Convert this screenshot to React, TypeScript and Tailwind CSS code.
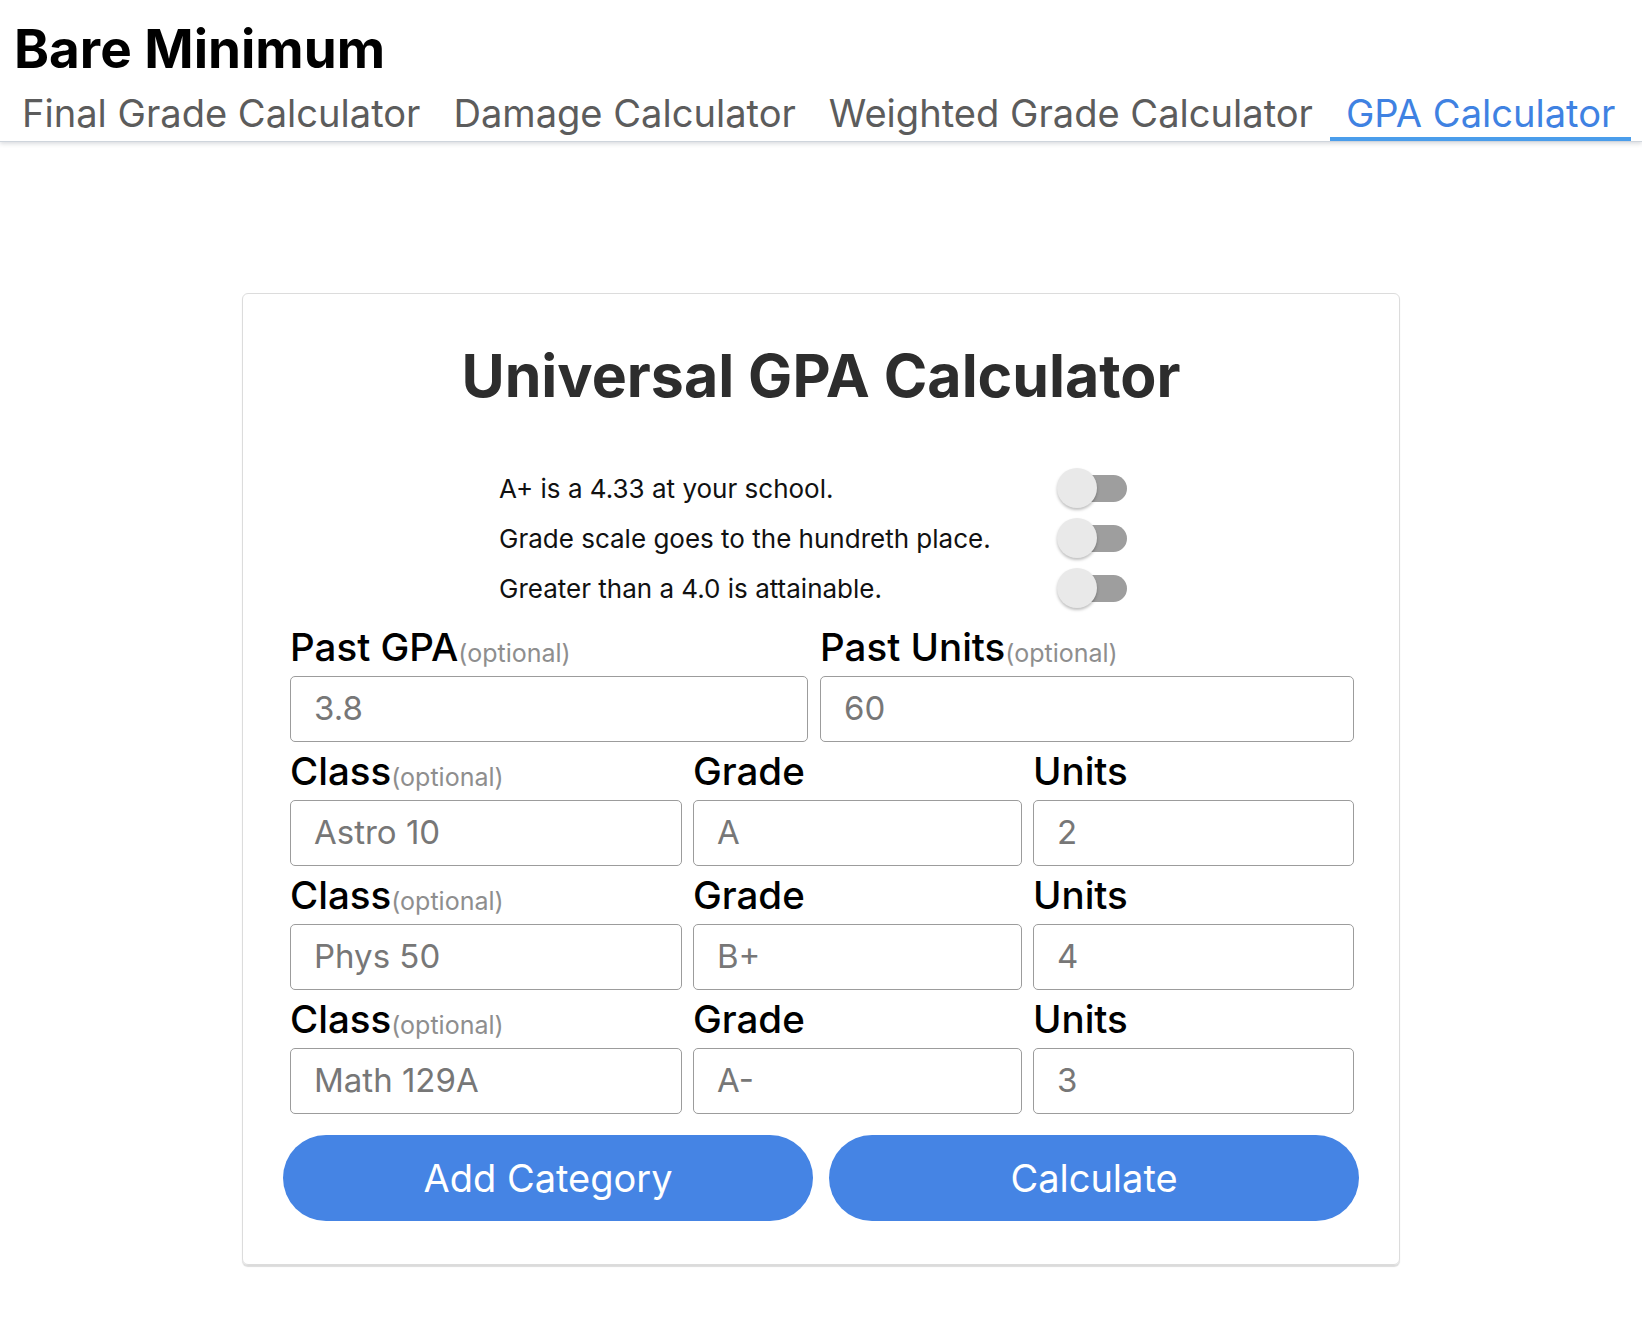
import React from 'react';

const tabs = ['Final Grade Calculator', 'Damage Calculator', 'Weighted Grade Calculator', 'GPA Calculator'];

const options = [
  'A+ is a 4.33 at your school.',
  'Grade scale goes to the hundreth place.',
  'Greater than a 4.0 is attainable.',
];

const classes = [
  { name: 'Astro 10', grade: 'A', units: '2' },
  { name: 'Phys 50', grade: 'B+', units: '4' },
  { name: 'Math 129A', grade: 'A-', units: '3' },
];

const font = { fontFamily: 'Inter, "Noto Sans", sans-serif' };

const Toggle: React.FC = () => (
  <div className="relative w-[70px] h-[40px] flex items-center">
    <div className="ml-[6px] w-[64px] h-[27px] rounded-full bg-[#9e9e9e]" />
    <div className="absolute left-0 top-0 w-[40px] h-[40px] rounded-full bg-[#e9e9e9] shadow-[0_2px_3px_rgba(0,0,0,0.25)]" />
  </div>
);

const Label: React.FC<{ text: string; optional?: boolean }> = ({ text, optional }) => (
  <div className="h-[58px] flex items-end pb-[10px]">
    <span className="text-[38.5px] leading-none font-medium text-black">{text}</span>
    {optional && <span className="text-[25px] leading-none text-[#8e8e8e]">(optional)</span>}
  </div>
);

const Field: React.FC<{ value: string }> = ({ value }) => (
  <div className="h-[66px] border-[1.5px] border-[#9c9c9c] rounded-[5px] flex items-center pl-[23px] text-[33px] text-[#777777]">
    {value}
  </div>
);

export default function App() {
  return (
    <div className="min-h-screen bg-white" style={font}>
      {/* Header */}
      <header className="border-b border-[#cfd5dc] shadow-[0_2px_4px_rgba(60,70,90,0.18)]">
        <h1 className="pl-[14px] pt-[23px] text-[53px] leading-none font-bold text-black">Bare Minimum</h1>
        <nav className="flex gap-x-[1px] pl-[6px] mt-[18px]">
          {tabs.map((t) => {
            const active = t === 'GPA Calculator';
            return (
              <div
                key={t}
                className={
                  active
                    ? 'px-[16px] pb-[5px] border-b-[4px] border-[#4a9deb] text-[38.1px] leading-none text-[#3f82e2]'
                    : 'px-[16px] pb-[5px] border-b-[4px] border-transparent text-[38.1px] leading-none text-[#5c5c5c]'
                }
              >
                {t}
              </div>
            );
          })}
        </nav>
      </header>

      {/* Card */}
      <div className="mx-auto mt-[151px] w-[1158px] border border-[#dcdcdc] rounded-[6px] shadow-[0_2px_1px_rgba(0,0,0,0.14)] pt-[52px] pb-[43px] px-[47px]">
        <h2 className="text-center text-[59px] leading-none font-bold text-[#2d2d2d]">Universal GPA Calculator</h2>

        <div className="ml-[209px] mt-[58px] grid grid-cols-[558px_70px]">
          {options.map((o) => (
            <React.Fragment key={o}>
              <div className="h-[50px] flex items-center text-[26px] text-[#111111]">{o}</div>
              <div className="h-[50px] flex items-center">
                <Toggle />
              </div>
            </React.Fragment>
          ))}
        </div>

        <div className="mt-[5px] grid grid-cols-[518px_534px] gap-x-[12px]">
          <div>
            <Label text="Past GPA" optional />
            <Field value="3.8" />
          </div>
          <div>
            <Label text="Past Units" optional />
            <Field value="60" />
          </div>
        </div>

        {classes.map((c) => (
          <div key={c.name} className="grid grid-cols-[392px_329px_321px] gap-x-[11px]">
            <div>
              <Label text="Class" optional />
              <Field value={c.name} />
            </div>
            <div>
              <Label text="Grade" />
              <Field value={c.grade} />
            </div>
            <div>
              <Label text="Units" />
              <Field value={c.units} />
            </div>
          </div>
        ))}

        <div className="mt-[21px] -ml-[7px] w-[1076px] grid grid-cols-2 gap-x-[16px]">
          <button className="h-[86px] rounded-full bg-[#4584e4] text-white text-[38px]">Add Category</button>
          <button className="h-[86px] rounded-full bg-[#4584e4] text-white text-[38px]">Calculate</button>
        </div>
      </div>
    </div>
  );
}
